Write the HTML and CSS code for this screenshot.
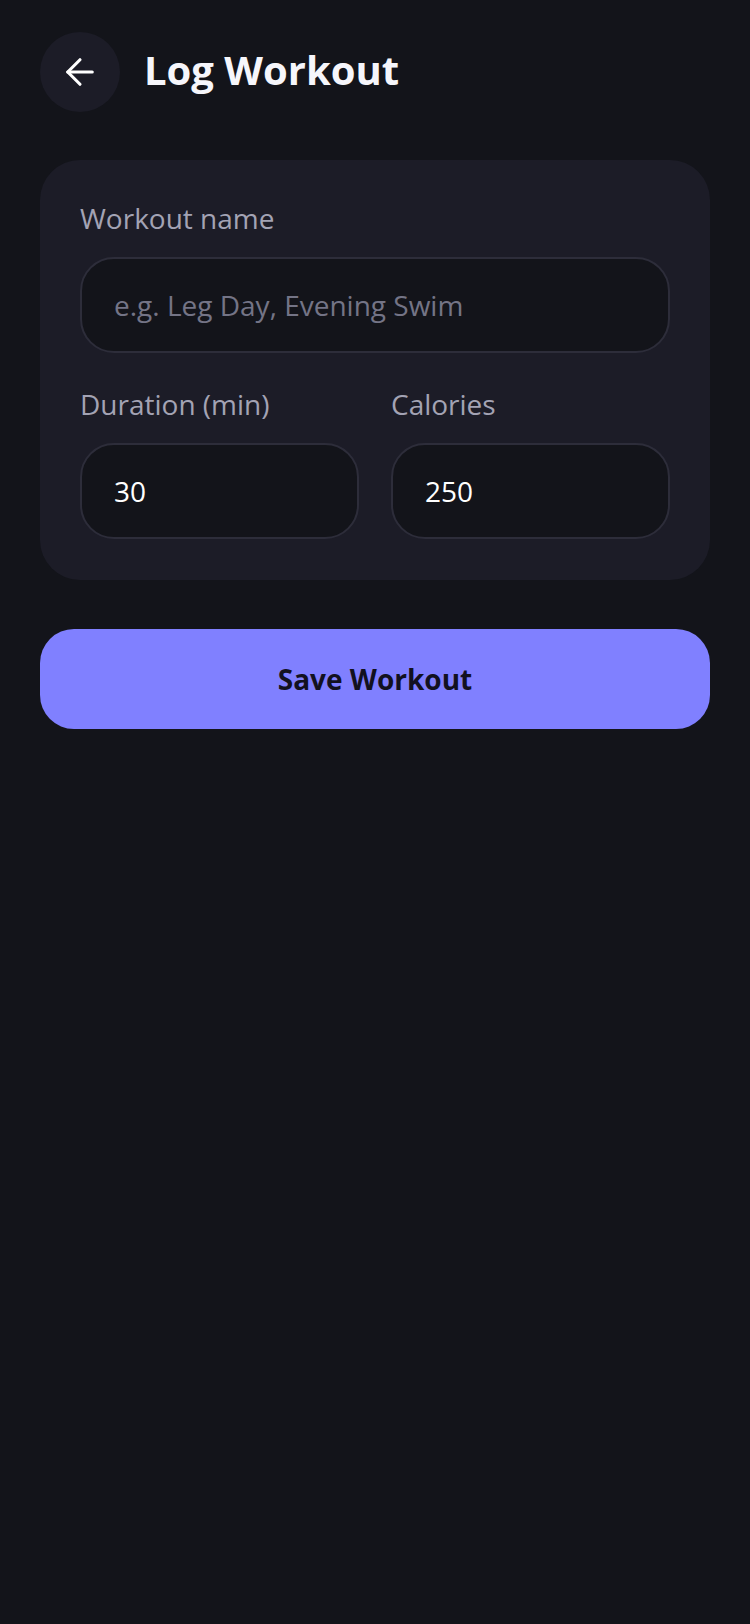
FILE: index.html
```html
<!DOCTYPE html>
<html lang="en">
<head>
    <meta charset="UTF-8">
    <meta name="viewport" content="width=device-width, initial-scale=1.0">
    <title>Log Workout</title>
    <link rel="stylesheet" href="styles.css">
</head>
<body>
    <div class="screen">
        <header class="top-bar">
            <button class="back-btn" aria-label="Back">
                <svg width="42" height="42" viewBox="0 0 24 24" fill="none" stroke="currentColor" stroke-width="1.8" stroke-linecap="round" stroke-linejoin="round">
                    <path d="M19 12H5"/>
                    <path d="M12 19l-7-7 7-7"/>
                </svg>
            </button>
            <h1>Log Workout</h1>
        </header>

        <form class="card" onsubmit="return false">
            <div class="field">
                <label for="name">Workout name</label>
                <input id="name" type="text" placeholder="e.g. Leg Day, Evening Swim">
            </div>

            <div class="field-row">
                <div class="field">
                    <label for="duration">Duration (min)</label>
                    <input id="duration" type="number" value="30">
                </div>
                <div class="field">
                    <label for="calories">Calories</label>
                    <input id="calories" type="number" value="250">
                </div>
            </div>
        </form>

        <button class="save-btn">Save Workout</button>
    </div>
</body>
</html>
```

FILE: styles.css
```css
* {
    margin: 0;
    padding: 0;
    box-sizing: border-box;
}

body {
    font-family: 'Open Sans', 'Noto Sans', sans-serif;
    background: #13141a;
    color: #ffffff;
    min-height: 100vh;
}

.screen {
    padding: 32px 40px;
}

.top-bar {
    display: flex;
    align-items: center;
    gap: 24px;
    height: 80px;
}

.back-btn {
    width: 80px;
    height: 80px;
    flex-shrink: 0;
    border-radius: 50%;
    border: none;
    background: #1c1c27;
    color: #ffffff;
    display: flex;
    align-items: center;
    justify-content: center;
    cursor: pointer;
}

h1 {
    font-size: 40px;
    font-weight: 700;
    line-height: 54px;
    padding-bottom: 5px;
    color: #f6f6fb;
}

.card {
    margin-top: 48px;
    background: #1c1c27;
    border-radius: 40px;
    padding: 40px 40px 41px;
    display: flex;
    flex-direction: column;
    gap: 33px;
}

.field {
    display: flex;
    flex-direction: column;
    min-width: 0;
}

.field-row {
    display: grid;
    grid-template-columns: 1fr 1fr;
    gap: 32px;
}

label {
    font-size: 28px;
    line-height: 37px;
    color: #a3a3b4;
    margin-bottom: 20px;
}

input {
    width: 100%;
    height: 96px;
    padding: 0 32px;
    background: #13141a;
    border: 2px solid #2d2d3a;
    border-radius: 34px;
    color: #ffffff;
    font-family: inherit;
    font-size: 28px;
    outline: none;
    -moz-appearance: textfield;
}

input::placeholder {
    color: #747486;
}

input::-webkit-outer-spin-button,
input::-webkit-inner-spin-button {
    -webkit-appearance: none;
    margin: 0;
}

.save-btn {
    margin-top: 49px;
    width: 100%;
    height: 100px;
    border: none;
    border-radius: 34px;
    background: #8080ff;
    color: #12111f;
    font-family: inherit;
    font-size: 28px;
    font-weight: 700;
    cursor: pointer;
}
```
